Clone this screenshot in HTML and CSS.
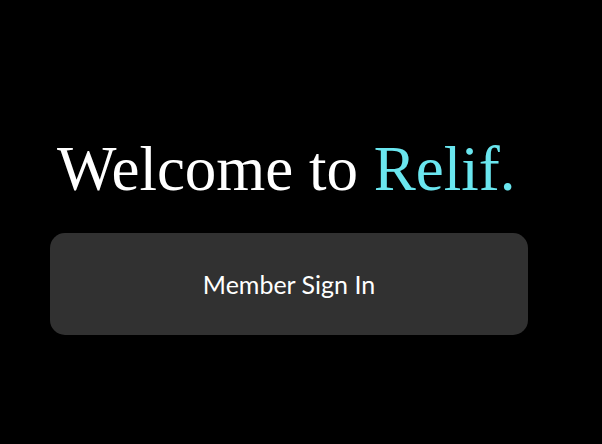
FILE: index.html
```html
<!DOCTYPE html>
<html>
<head>
<meta charset="utf-8">
<link rel="stylesheet" href="styles.css">
</head>
<body>
<main class="page">
  <h1 class="title">Welcome to <span class="brand">Relif.</span></h1>
  <button class="signin">Member Sign In</button>
</main>
</body>
</html>
```
FILE: styles.css
```css
html, body {
  margin: 0;
  padding: 0;
  background: #000;
  height: 100%;
}
.page {
  width: 602px;
  height: 444px;
  box-sizing: border-box;
  padding: 133px 0 0 50px;
  display: flex;
  flex-direction: column;
  align-items: flex-start;
}
.title {
  margin: 0 0 0 7px;
  font-family: "Liberation Serif", serif;
  font-weight: normal;
  font-size: 63px;
  line-height: 72px;
  color: #fff;
  white-space: nowrap;
}
.brand {
  color: #6ae6ef;
}
.signin {
  margin-top: 28px;
  width: 478px;
  height: 102px;
  border: none;
  border-radius: 15px;
  background: #313131;
  color: #fff;
  font-family: Lato, sans-serif;
  font-size: 25px;
  padding: 0;
}
```
